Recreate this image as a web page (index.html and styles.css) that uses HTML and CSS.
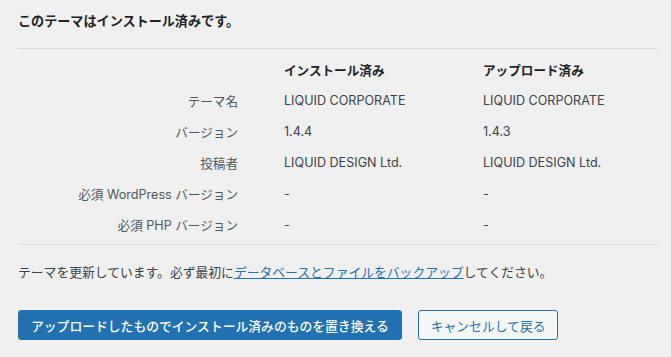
FILE: index.html
```html
<!DOCTYPE html>
<html lang="ja">
<head>
    <meta charset="UTF-8">
    <meta name="viewport" content="width=device-width, initial-scale=1.0">
    <title>テーマの更新</title>
    <link rel="stylesheet" href="styles.css">
</head>
<body>

    <div class="wrap">
        <h2 class="notice-title">このテーマはインストール済みです。</h2>

        <div class="compare">
            <table class="compare-table">
                <colgroup>
                    <col class="col-label">
                    <col class="col-current">
                    <col>
                </colgroup>
                <thead>
                    <tr>
                        <th></th>
                        <th>インストール済み</th>
                        <th>アップロード済み</th>
                    </tr>
                </thead>
                <tbody>
                    <tr>
                        <td class="label">テーマ名</td>
                        <td>LIQUID CORPORATE</td>
                        <td>LIQUID CORPORATE</td>
                    </tr>
                    <tr>
                        <td class="label">バージョン</td>
                        <td>1.4.4</td>
                        <td>1.4.3</td>
                    </tr>
                    <tr>
                        <td class="label">投稿者</td>
                        <td>LIQUID DESIGN Ltd.</td>
                        <td>LIQUID DESIGN Ltd.</td>
                    </tr>
                    <tr>
                        <td class="label">必須 WordPress バージョン</td>
                        <td>-</td>
                        <td>-</td>
                    </tr>
                    <tr>
                        <td class="label">必須 PHP バージョン</td>
                        <td>-</td>
                        <td>-</td>
                    </tr>
                </tbody>
            </table>
        </div>

        <p class="backup-note">テーマを更新しています。必ず最初に<a href="#">データベースとファイルをバックアップ</a>してください。</p>

        <div class="actions">
            <a href="#" class="button button-primary">アップロードしたものでインストール済みのものを置き換える</a>
            <a href="#" class="button">キャンセルして戻る</a>
        </div>
    </div>

</body>
</html>
```

FILE: styles.css
```css
body {
    margin: 0;
    background-color: #f0f0f1;
    color: #3c434a;
    font-family: Inter, "Noto Sans CJK JP", sans-serif;
    font-size: 12.6px;
}
.wrap {
    padding: 0 13px 0 18px;
}
.notice-title {
    margin: 0;
    padding-top: 12px;
    font-size: 13.1px;
    line-height: 18px;
    font-weight: 700;
    color: #1d2327;
}
.compare {
    margin-top: 18px;
    padding: 5px 0 4px;
    border-top: 1px solid #dcdcde;
    border-bottom: 1px solid #dcdcde;
}
.compare-table {
    width: 100%;
    border-collapse: collapse;
    table-layout: fixed;
}
.col-label {
    width: 266px;
}
.col-current {
    width: 199px;
}
.compare-table th,
.compare-table td {
    height: 31px;
    padding: 0;
    text-align: left;
    vertical-align: middle;
    white-space: nowrap;
}
.compare-table th {
    font-weight: 700;
    color: #1d2327;
}
.compare-table td.label {
    text-align: right;
    padding-right: 46px;
    color: #50575e;
}
.backup-note {
    margin: 19px 0 0;
    font-size: 12.8px;
    line-height: 18px;
}
.backup-note a {
    color: #2271b1;
    text-decoration: underline;
}
.actions {
    margin-top: 28px;
    display: flex;
    gap: 16px;
}
.button {
    display: inline-flex;
    align-items: center;
    height: 28px;
    padding: 0 12px;
    border: 1px solid #2271b1;
    border-radius: 3px;
    background-color: #f6f7f7;
    color: #2271b1;
    font-size: 12.8px;
    text-decoration: none;
}
.button-primary {
    background-color: #2271b1;
    color: #ffffff;
    font-weight: 500;
}
```
